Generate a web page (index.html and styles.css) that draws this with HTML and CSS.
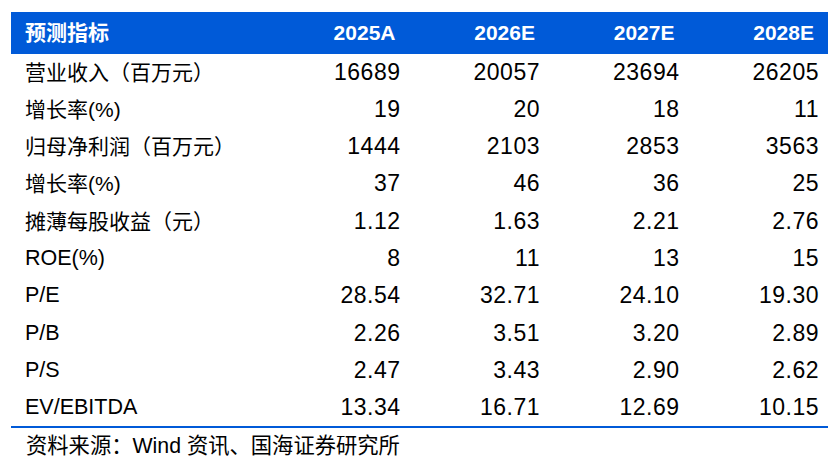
FILE: index.html
```html
<!DOCTYPE html>
<html lang="zh-CN">
<head>
<meta charset="utf-8">
<title>预测指标</title>
<link rel="stylesheet" href="styles.css">
</head>
<body>
<div class="sheet">
  <div class="table">
    <div class="row head">
      <div class="label">预测指标</div>
      <div class="num">2025A</div>
      <div class="num">2026E</div>
      <div class="num">2027E</div>
      <div class="num">2028E</div>
    </div>
    <div class="row"><div class="label">营业收入（百万元）</div><div class="num">16689</div><div class="num">20057</div><div class="num">23694</div><div class="num">26205</div></div>
    <div class="row"><div class="label">增长率(%)</div><div class="num">19</div><div class="num">20</div><div class="num">18</div><div class="num">11</div></div>
    <div class="row"><div class="label">归母净利润（百万元）</div><div class="num">1444</div><div class="num">2103</div><div class="num">2853</div><div class="num">3563</div></div>
    <div class="row"><div class="label">增长率(%)</div><div class="num">37</div><div class="num">46</div><div class="num">36</div><div class="num">25</div></div>
    <div class="row"><div class="label">摊薄每股收益（元）</div><div class="num">1.12</div><div class="num">1.63</div><div class="num">2.21</div><div class="num">2.76</div></div>
    <div class="row"><div class="label latin">ROE(%)</div><div class="num">8</div><div class="num">11</div><div class="num">13</div><div class="num">15</div></div>
    <div class="row"><div class="label latin">P/E</div><div class="num">28.54</div><div class="num">32.71</div><div class="num">24.10</div><div class="num">19.30</div></div>
    <div class="row"><div class="label latin">P/B</div><div class="num">2.26</div><div class="num">3.51</div><div class="num">3.20</div><div class="num">2.89</div></div>
    <div class="row"><div class="label latin">P/S</div><div class="num">2.47</div><div class="num">3.43</div><div class="num">2.90</div><div class="num">2.62</div></div>
    <div class="row"><div class="label latin">EV/EBITDA</div><div class="num">13.34</div><div class="num">16.71</div><div class="num">12.69</div><div class="num">10.15</div></div>
  </div>
  <div class="source">资料来源：Wind 资讯、国海证券研究所</div>
</div>
</body>
</html>
```

FILE: styles.css
```css
html, body {
  margin: 0;
  padding: 0;
  background: #ffffff;
}

body {
  font-family: "Liberation Sans", Arial, "Noto Sans CJK SC", sans-serif;
  font-size: 21px;
  color: #000000;
}

.sheet {
  margin: 12px 0 0 11px;
  width: 817px;
}

.table {
  border-bottom: 2px solid #005ad8;
}

.row {
  display: grid;
  grid-template-columns: 1fr 139.5px 139.5px 139.5px 139.5px;
  padding-right: 9px;
  height: 37.3px;
  line-height: 37.3px;
  align-items: center;
}

.row.head {
  height: 41.5px;
  line-height: 41.5px;
  background: #005ad8;
  color: #ffffff;
  font-weight: bold;
}

.label {
  padding-left: 14px;
  white-space: nowrap;
}

.label.latin {
  font-size: 21.5px;
}

.num {
  text-align: right;
  white-space: nowrap;
  font-size: 23px;
  letter-spacing: 0.5px;
}

.row.head .num {
  font-size: 21px;
  letter-spacing: 0;
  padding-right: 5px;
}

.source {
  padding-left: 15px;
  height: 37px;
  line-height: 37px;
  font-size: 21.3px;
  white-space: nowrap;
}
```
